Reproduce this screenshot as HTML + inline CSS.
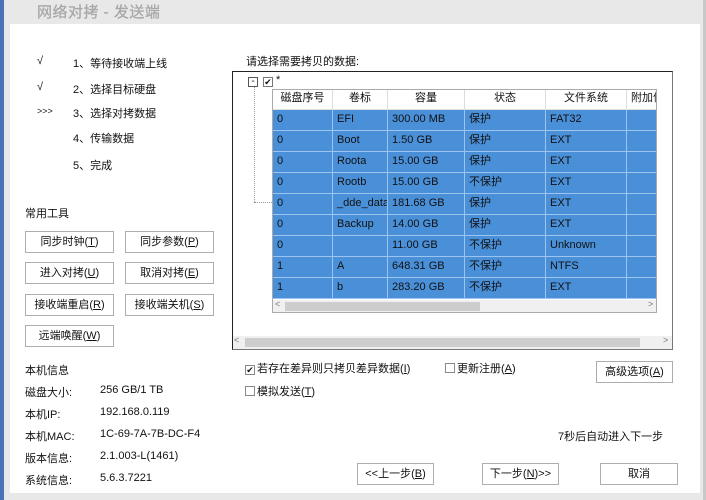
<!DOCTYPE html>
<html><head><meta charset="utf-8"><style>
*{margin:0;padding:0;box-sizing:border-box}
body{width:706px;height:500px;position:relative;background:#e8e8e8;font-family:"Liberation Sans","Noto Sans CJK SC",sans-serif;font-size:11px;color:#111;overflow:hidden}
.a{position:absolute;white-space:nowrap}
.btn{position:absolute;border:1px solid #adadad;background:#fff;text-align:center;font-size:11px;line-height:20px}
.cb{display:inline-block;width:10px;height:10px;border:1px solid #888;vertical-align:-1px;margin-right:2px;font-size:9px;line-height:8px;text-align:center;background:#fff}
table{border-collapse:collapse;position:absolute;table-layout:fixed;width:394px}
td,th{height:21px;line-height:19px;border:1px solid #fff;font-weight:normal;padding:0 4px;text-align:left;font-size:11px;overflow:hidden;white-space:nowrap}
th{background:#fff;border:1px solid #ddd;border-top:none;text-align:center;height:20px}
td{background:#4a90d9;color:#111;border-color:#9cc4ee}
</style></head><body>
<div class="a" style="left:0;top:0;width:4px;height:500px;background:#4a72b8"></div>
<div class="a" style="left:10px;top:24px;width:690px;height:469px;background:#fff"></div>
<div class="a" style="left:703px;top:0;width:3px;height:500px;background:#c8c8c8"></div>
<div class="a" style="left:37px;top:1px;font-size:15px;color:#a8a8a8;letter-spacing:0.5px;-webkit-text-stroke:0.3px #a8a8a8">网络对拷 - 发送端</div>

<div class="a" style="left:37px;top:55px">√</div><div class="a" style="left:73px;top:55px">1、等待接收端上线</div>
<div class="a" style="left:37px;top:81px">√</div><div class="a" style="left:73px;top:81px">2、选择目标硬盘</div>
<div class="a" style="left:37px;top:106px;font-size:9px">&gt;&gt;&gt;</div><div class="a" style="left:73px;top:105px">3、选择对拷数据</div>
<div class="a" style="left:73px;top:130px">4、传输数据</div>
<div class="a" style="left:73px;top:157px">5、完成</div>

<div class="a" style="left:25px;top:205px">常用工具</div>
<div class="btn" style="left:25px;top:231px;width:89px;height:22px">同步时钟(<u>T</u>)</div>
<div class="btn" style="left:125px;top:231px;width:89px;height:22px">同步参数(<u>P</u>)</div>
<div class="btn" style="left:25px;top:262px;width:89px;height:22px">进入对拷(<u>U</u>)</div>
<div class="btn" style="left:125px;top:262px;width:89px;height:22px">取消对拷(<u>E</u>)</div>
<div class="btn" style="left:25px;top:294px;width:89px;height:22px">接收端重启(<u>R</u>)</div>
<div class="btn" style="left:125px;top:294px;width:89px;height:22px">接收端关机(<u>S</u>)</div>
<div class="btn" style="left:25px;top:325px;width:89px;height:22px">远端唤醒(<u>W</u>)</div>

<div class="a" style="left:25px;top:362px">本机信息</div>
<div class="a" style="left:25px;top:384px">磁盘大小:</div><div class="a" style="left:100px;top:384px">256 GB/1 TB</div>
<div class="a" style="left:25px;top:406px">本机IP:</div><div class="a" style="left:100px;top:406px">192.168.0.119</div>
<div class="a" style="left:25px;top:428px">本机MAC:</div><div class="a" style="left:100px;top:428px">1C-69-7A-7B-DC-F4</div>
<div class="a" style="left:25px;top:450px">版本信息:</div><div class="a" style="left:100px;top:450px">2.1.003-L(1461)</div>
<div class="a" style="left:25px;top:472px">系统信息:</div><div class="a" style="left:100px;top:472px">5.6.3.7221</div>

<div class="a" style="left:246px;top:53px">请选择需要拷贝的数据:</div>
<div class="a" style="left:232px;top:71px;width:441px;height:279px;border:1px solid #222;border-right-color:#777;border-bottom-color:#777;background:#fff"></div>
<div class="a" style="left:248px;top:77px;width:10px;height:10px;border:1px solid #555;font-size:10px;line-height:7px;text-align:center">-</div>
<div class="a" style="left:263px;top:77px;width:10px;height:10px;border:1px solid #777;font-size:9px;line-height:9px;text-align:center">✔</div>
<div class="a" style="left:276px;top:74px">*</div>
<div class="a" style="left:254px;top:87px;height:115px;border-left:1px dotted #999"></div>
<div class="a" style="left:254px;top:202px;width:18px;border-top:1px dotted #999"></div>
<div class="a" style="left:272px;top:89px;width:385px;height:224px;border:1px solid #aaa;overflow:hidden;background:#fff">
<table style="left:-1px;top:-1px">
<colgroup><col style="width:60px"><col style="width:55px"><col style="width:77px"><col style="width:81px"><col style="width:81px"><col style="width:40px"></colgroup>
<tr><th>磁盘序号</th><th>卷标</th><th>容量</th><th>状态</th><th>文件系统</th><th>附加信</th></tr>
<tr><td>0</td><td>EFI</td><td>300.00 MB</td><td>保护</td><td>FAT32</td><td></td></tr>
<tr><td>0</td><td>Boot</td><td>1.50 GB</td><td>保护</td><td>EXT</td><td></td></tr>
<tr><td>0</td><td>Roota</td><td>15.00 GB</td><td>保护</td><td>EXT</td><td></td></tr>
<tr><td>0</td><td>Rootb</td><td>15.00 GB</td><td>不保护</td><td>EXT</td><td></td></tr>
<tr><td>0</td><td>_dde_data</td><td>181.68 GB</td><td>保护</td><td>EXT</td><td></td></tr>
<tr><td>0</td><td>Backup</td><td>14.00 GB</td><td>保护</td><td>EXT</td><td></td></tr>
<tr><td>0</td><td></td><td>11.00 GB</td><td>不保护</td><td>Unknown</td><td></td></tr>
<tr><td>1</td><td>A</td><td>648.31 GB</td><td>不保护</td><td>NTFS</td><td></td></tr>
<tr><td>1</td><td>b</td><td>283.20 GB</td><td>不保护</td><td>EXT</td><td></td></tr>
</table>
<div class="a" style="left:0;top:210px;width:383px;height:13px;background:#f0f0f0"></div>
<div class="a" style="left:12px;top:212px;width:195px;height:9px;background:#cdcdcd"></div>
<div class="a" style="left:2px;top:209px;font-size:9px;color:#777">&lt;</div>
<div class="a" style="left:375px;top:209px;font-size:9px;color:#777">&gt;</div>
</div>
<div class="a" style="left:233px;top:336px;width:439px;height:13px;background:#f0f0f0"></div>
<div class="a" style="left:245px;top:338px;width:395px;height:9px;background:#cdcdcd"></div>
<div class="a" style="left:234px;top:335px;font-size:9px;color:#777">&lt;</div>
<div class="a" style="left:663px;top:335px;font-size:9px;color:#777">&gt;</div>

<div class="a" style="left:245px;top:360px"><span class="cb">✔</span>若存在差异则只拷贝差异数据(<u>I</u>)</div>
<div class="a" style="left:445px;top:360px"><span class="cb"></span>更新注册(<u>A</u>)</div>
<div class="a" style="left:245px;top:383px"><span class="cb"></span>模拟发送(<u>T</u>)</div>
<div class="btn" style="left:596px;top:361px;width:77px;height:22px">高级选项(<u>A</u>)</div>
<div class="a" style="left:558px;top:428px">7秒后自动进入下一步</div>
<div class="btn" style="left:357px;top:463px;width:77px;height:22px">&lt;&lt;上一步(<u>B</u>)</div>
<div class="btn" style="left:482px;top:463px;width:77px;height:22px">下一步(<u>N</u>)&gt;&gt;</div>
<div class="btn" style="left:600px;top:463px;width:78px;height:22px">取消</div>
</body></html>
